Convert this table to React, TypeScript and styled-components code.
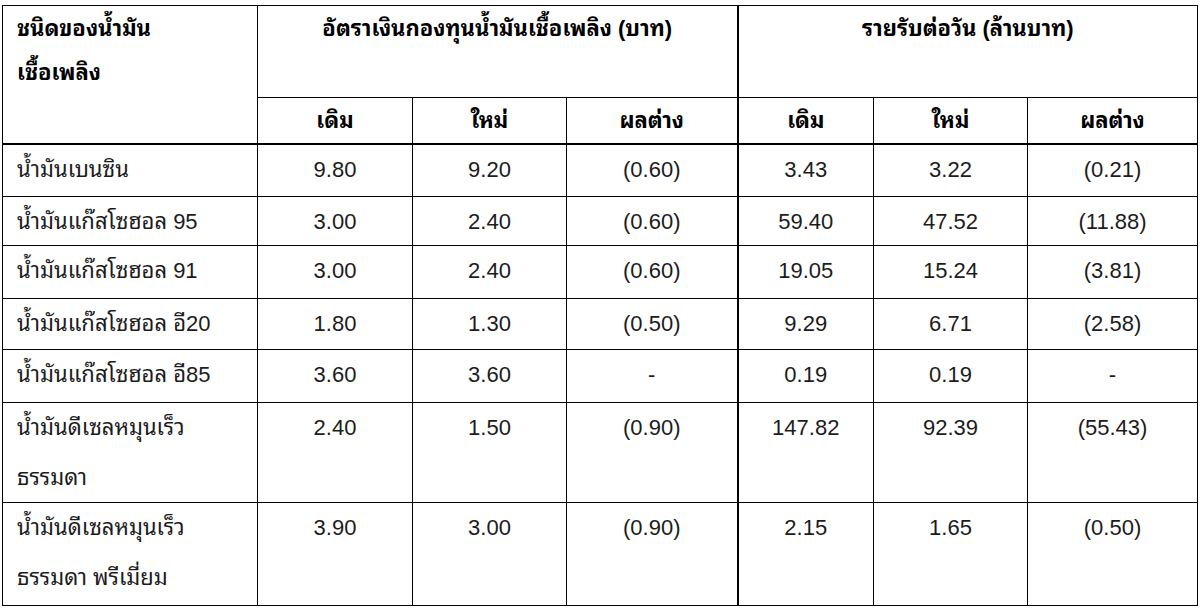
import React from 'react'
import styled, { createGlobalStyle } from 'styled-components'

const GlobalStyle = createGlobalStyle`
  html, body {
    margin: 0;
    padding: 0;
    background: #ffffff;
  }
  body {
    font-family: "Liberation Sans", "Noto Sans Thai Looped", "Loma", "Garuda", "Waree", "Noto Sans Thai", "Noto Sans", sans-serif;
  }
`

type Row = {
  name: string[]
  values: string[]
  height: number
}

const colWidths = [255, 155, 154, 171, 136, 154, 170]

const rows: Row[] = [
  { name: ['น้ำมันเบนซิน'], values: ['9.80', '9.20', '(0.60)', '3.43', '3.22', '(0.21)'], height: 52 },
  { name: ['น้ำมันแก๊สโซฮอล 95'], values: ['3.00', '2.40', '(0.60)', '59.40', '47.52', '(11.88)'], height: 49 },
  { name: ['น้ำมันแก๊สโซฮอล 91'], values: ['3.00', '2.40', '(0.60)', '19.05', '15.24', '(3.81)'], height: 53 },
  { name: ['น้ำมันแก๊สโซฮอล อี20'], values: ['1.80', '1.30', '(0.50)', '9.29', '6.71', '(2.58)'], height: 51 },
  { name: ['น้ำมันแก๊สโซฮอล อี85'], values: ['3.60', '3.60', '-', '0.19', '0.19', '-'], height: 53 },
  { name: ['น้ำมันดีเซลหมุนเร็ว', 'ธรรมดา'], values: ['2.40', '1.50', '(0.90)', '147.82', '92.39', '(55.43)'], height: 100 },
  { name: ['น้ำมันดีเซลหมุนเร็ว', 'ธรรมดา พรีเมี่ยม'], values: ['3.90', '3.00', '(0.90)', '2.15', '1.65', '(0.50)'], height: 103 },
]

const subHeads = ['เดิม', 'ใหม่', 'ผลต่าง', 'เดิม', 'ใหม่', 'ผลต่าง']

export default function App() {
  return (
    <Page>
      <GlobalStyle />
      <Table>
        <colgroup>
          {colWidths.map((w, i) => (
            <Col key={i} $w={w} />
          ))}
        </colgroup>
        <thead>
          <HeadRow $h={92}>
            <HeadCell rowSpan={2} $align="left">
              ชนิดของน้ำมัน
              <br />
              เชื้อเพลิง
            </HeadCell>
            <HeadCell colSpan={3} $thickRight>
              อัตราเงินกองทุนน้ำมันเชื้อเพลิง (บาท)
            </HeadCell>
            <HeadCell colSpan={3}>รายรับต่อวัน (ล้านบาท)</HeadCell>
          </HeadRow>
          <HeadRow $h={46}>
            {subHeads.map((s, i) => (
              <HeadCell key={i} $thickRight={i === 2}>
                {s}
              </HeadCell>
            ))}
          </HeadRow>
        </thead>
        <tbody>
          {rows.map((r, ri) => (
            <BodyRow key={ri} $h={r.height} $thickTop={ri === 0}>
              <NameCell>
                {r.name.map((n, i) => (
                  <NameLine key={i}>{n}</NameLine>
                ))}
              </NameCell>
              {r.values.map((v, i) => (
                <ValueCell key={i} $thickRight={i === 2}>
                  {v}
                </ValueCell>
              ))}
            </BodyRow>
          ))}
        </tbody>
      </Table>
    </Page>
  )
}

const Page = styled.div`
  padding: 5px 0 0 2px;
`

const Table = styled.table`
  border-collapse: collapse;
  table-layout: fixed;
  width: 1195px;
  border: 1px solid #000;
  color: #1c1c1c;
  font-size: 22px;
`

const Col = styled.col<{ $w: number }>`
  width: ${p => p.$w}px;
`

const HeadRow = styled.tr<{ $h: number }>`
  height: ${p => p.$h}px;
`

const HeadCell = styled.th<{ $align?: 'left' | 'center'; $thickRight?: boolean }>`
  border: 1px solid #000;
  border-right: ${p => (p.$thickRight ? '2px' : '1px')} solid #000;
  padding: 1px 14px 0;
  vertical-align: top;
  text-align: ${p => p.$align || 'center'};
  font-weight: bold;
  line-height: 44px;
  color: #000;
`

const BodyRow = styled.tr<{ $h: number; $thickTop?: boolean }>`
  height: ${p => p.$h}px;
  ${p => (p.$thickTop ? 'td { border-top: 2px solid #000; }' : '')}
`

const NameCell = styled.td`
  border: 1px solid #000;
  padding: 2px 14px 0;
  vertical-align: top;
  line-height: 46px;
  white-space: nowrap;
`

const NameLine = styled.div`
  & + & {
    margin-top: 4px;
  }
`

const ValueCell = styled.td<{ $thickRight?: boolean }>`
  border: 1px solid #000;
  border-right: ${p => (p.$thickRight ? '2px' : '1px')} solid #000;
  padding: 2px 4px 0;
  vertical-align: top;
  text-align: center;
  line-height: 46px;
`
